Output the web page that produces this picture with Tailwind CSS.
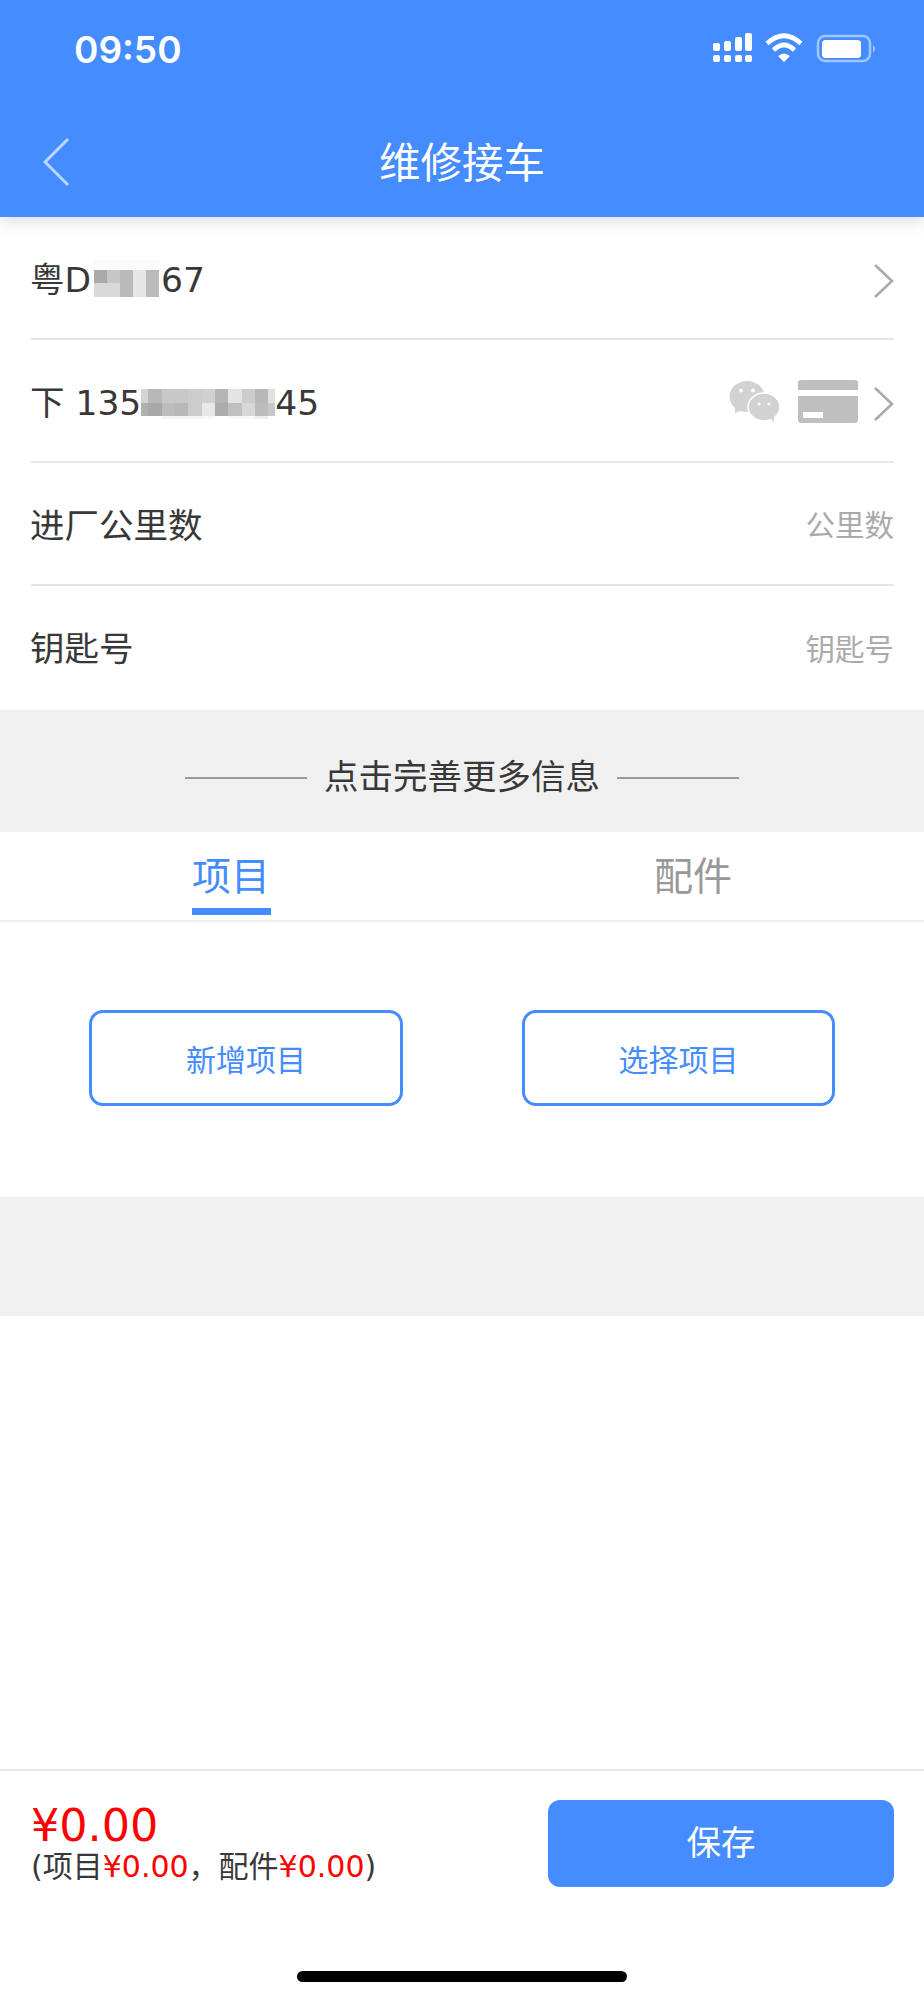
<!DOCTYPE html>
<html lang="zh">
<head>
<meta charset="utf-8">
<title>维修接车</title>
<script src="https://cdn.jsdelivr.net/npm/@tailwindcss/browser@4"></script>
</head>
<body class="bg-white">
<div class="w-[924px] h-[2000px] flex flex-col overflow-hidden relative bg-white text-[#383838] font-['DejaVu_Sans','Noto_Sans_CJK_SC',sans-serif]">

  <!-- header -->
  <header class="relative z-10 h-[217px] shrink-0 bg-[#448cff] text-white shadow-[0_4px_16px_rgba(0,0,0,0.14)]">
    <div class="h-[100px] flex items-start justify-between pt-[27px] pl-[74px] pr-[47px]">
      <span class="text-[37px] leading-[46px] font-semibold font-['Inter',sans-serif]">09:50</span>
      <svg width="164" height="32" viewBox="0 0 164 32" class="mt-[6px]" fill="white">
        <rect x="0" y="10" width="7" height="8" rx="2"/><rect x="11" y="8" width="7" height="10" rx="2"/><rect x="22" y="4" width="7" height="14" rx="2"/><rect x="32" y="0" width="7" height="18" rx="2"/>
        <rect x="0" y="22" width="7" height="7" rx="2"/><rect x="11" y="22" width="7" height="7" rx="2"/><rect x="22" y="22" width="7" height="7" rx="2"/><rect x="32" y="22" width="7" height="7" rx="2"/>
        <g fill="none" stroke="white" stroke-width="4.6">
          <path d="M54 10.5 Q71 -5 88 10.5"/><path d="M60.5 17 Q71 7 81.5 17"/>
        </g>
        <path d="M65 23 Q71 18 77 23 L71 29 Z"/>
        <rect x="105" y="3" width="52" height="25" rx="7" fill="none" stroke="white" stroke-opacity="0.5" stroke-width="2.5"/>
        <rect x="109" y="7" width="39" height="18" rx="3.5"/>
        <path d="M160 12 Q164 15.5 160 20 Z" fill-opacity="0.5"/>
      </svg>
    </div>
    <div class="relative h-[117px] flex items-center justify-center pt-[10px]">
      <svg width="28" height="52" viewBox="0 0 28 52" fill="none" class="absolute left-[43px] top-[37px]"><path d="M25 2 L2 25 L25 48" stroke="white" stroke-opacity="0.65" stroke-width="3"/></svg>
      <h1 class="text-[41.5px] leading-[50px] font-normal">维修接车</h1>
    </div>
  </header>

  <!-- form rows -->
  <section class="pl-[31px] pr-[30px] shrink-0">
    <div class="h-[123px] border-b-2 border-[#e6e6e6] flex items-center justify-between text-[34.5px] pt-[6px]">
      <div class="flex items-center -ml-px">
        <span>粤D</span>
        <div class="grid grid-cols-5 w-[65px] ml-[3px] h-[37px] mt-[-4px] grid-rows-[10px_13px_14px]">
          <i class="bg-[#fbfbfb]"></i><i class="bg-[#fbfbfb]"></i><i class="bg-[#fbfbfb]"></i><i class="bg-[#fbfbfb]"></i><i class="bg-[#fbfbfb]"></i>
          <i class="bg-[#aaaaaa]"></i><i class="bg-[#c6c6c6]"></i><i class="bg-[#b9b9b9]"></i><i class="bg-[#e6e6e6]"></i><i class="bg-[#bbbbbb]"></i>
          <i class="bg-[#d9d9d9]"></i><i class="bg-[#d9d9d9]"></i><i class="bg-[#b9b9b9]"></i><i class="bg-[#e6e6e6]"></i><i class="bg-[#bbbbbb]"></i>
        </div>
        <span class="ml-[2px]">67</span>
      </div>
      <svg width="22" height="36" viewBox="0 0 22 36" fill="none" class="-mr-px"><path d="M2 2 L19 18 L2 34" stroke="#aaaaaa" stroke-width="2.6"/></svg>
    </div>
    <div class="h-[123px] border-b-2 border-[#e6e6e6] flex items-center justify-between text-[34.5px] pt-[6px]">
      <div class="flex items-center -ml-px">
        <span class="whitespace-pre">下 135</span>
        <div class="grid grid-cols-[7px_repeat(9,13.33px)_7px] w-[134px] h-[30px] grid-rows-[14px_13px_3px] mt-[1px]">
          <i class="bg-[#d4d4d4]"></i><i class="bg-[#b8b8b8]"></i><i class="bg-[#c8c8c8]"></i><i class="bg-[#c8c8c8]"></i><i class="bg-[#cccccc]"></i><i class="bg-[#d0d0d0]"></i><i class="bg-[#b4b4b4]"></i><i class="bg-[#e4e4e4]"></i><i class="bg-[#cccccc]"></i><i class="bg-[#b8b8b8]"></i><i class="bg-[#e0e0e0]"></i>
          <i class="bg-[#b0b0b0]"></i><i class="bg-[#a8a8a8]"></i><i class="bg-[#bcbcbc]"></i><i class="bg-[#b8b8b8]"></i><i class="bg-[#cccccc]"></i><i class="bg-[#e8e8e8]"></i><i class="bg-[#acacac]"></i><i class="bg-[#c0c0c0]"></i><i class="bg-[#d8d8d8]"></i><i class="bg-[#bcbcbc]"></i><i class="bg-[#c8c8c8]"></i>
          <i class="bg-white"></i><i class="bg-white"></i><i class="bg-[#f4f4f4]"></i><i class="bg-[#f4f4f4]"></i><i class="bg-[#f4f4f4]"></i><i class="bg-[#f8f8f8]"></i><i class="bg-white"></i><i class="bg-[#f8f8f8]"></i><i class="bg-[#f8f8f8]"></i><i class="bg-[#eeeeee]"></i><i class="bg-white"></i>
        </div>
        <span>45</span>
      </div>
      <div class="flex items-center -mr-px">
        <svg width="50" height="41" viewBox="0 0 50 41" class="mr-[19px] mb-[4px]">
          <ellipse cx="18" cy="15.5" rx="17.5" ry="15.5" fill="#d2d2d2"/>
          <path d="M6 25 L6 32 L14 29 Z" fill="#d2d2d2"/>
          <ellipse cx="35" cy="26" rx="16" ry="14" fill="#d2d2d2" stroke="white" stroke-width="1.5"/>
          <path d="M41 37 L45 41 L45 34 Z" fill="#d2d2d2"/>
          <circle cx="12" cy="9.5" r="2" fill="white"/><circle cx="24" cy="9.5" r="2" fill="white"/>
          <circle cx="30" cy="23" r="1.6" fill="white"/><circle cx="40" cy="23" r="1.6" fill="white"/>
        </svg>
        <svg width="60" height="43" viewBox="0 0 60 43" class="mr-[15px] mb-[4px]" fill="#bfbfbf">
          <path d="M0 10 V3 a3 3 0 0 1 3 -3 H57 a3 3 0 0 1 3 3 V10 Z"/>
          <path fill-rule="evenodd" d="M0 16 H60 V40 a3 3 0 0 1 -3 3 H3 a3 3 0 0 1 -3 -3 Z M5 32 V38 H25 V32 Z"/>
        </svg>
        <svg width="22" height="36" viewBox="0 0 22 36" fill="none"><path d="M2 2 L19 18 L2 34" stroke="#aaaaaa" stroke-width="2.6"/></svg>
      </div>
    </div>
    <div class="h-[123px] border-b-2 border-[#e6e6e6] flex items-center justify-between text-[34.5px] pt-[6px]">
      <span class="-ml-px">进厂公里数</span><span class="text-[29.5px] text-[#aaaaaa]">公里数</span>
    </div>
    <div class="h-[124px] flex items-center justify-between text-[34.5px] pt-[4px]">
      <span class="-ml-px">钥匙号</span><span class="text-[29.5px] text-[#aaaaaa]">钥匙号</span>
    </div>
  </section>

  <!-- more info band -->
  <div class="h-[122px] shrink-0 bg-[#f0f0f0] flex items-center justify-center gap-[17px] text-[34.5px] pt-[14px]">
    <i class="block w-[122px] h-[2px] bg-[#999999]"></i>
    <span>点击完善更多信息</span>
    <i class="block w-[122px] h-[2px] bg-[#999999]"></i>
  </div>

  <!-- tabs -->
  <div class="h-[90px] shrink-0 grid grid-cols-2 border-b-2 border-[#eeeeee] text-[39px]">
    <div class="flex flex-col items-center text-[#448cff]">
      <span class="leading-[46px] mt-[22px]">项目</span>
      <i class="block w-[79px] h-[7px] mt-[8px] bg-[#448cff]"></i>
    </div>
    <div class="flex flex-col items-center text-[#999999]">
      <span class="leading-[46px] mt-[22px]">配件</span>
    </div>
  </div>

  <!-- actions -->
  <div class="h-[275px] shrink-0 flex items-start justify-between pl-[89px] pr-[89px] pt-[88px]">
    <button class="w-[314px] h-[96px] rounded-[14px] border-[3px] border-[#448cff] text-[#448cff] text-[30px] pt-[4px]">新增项目</button>
    <button class="w-[313px] h-[96px] rounded-[14px] border-[3px] border-[#448cff] text-[#448cff] text-[30px] pt-[4px]">选择项目</button>
  </div>

  <div class="h-[119px] shrink-0 bg-[#f0f0f0]"></div>
  <div class="flex-1"></div>

  <!-- footer -->
  <footer class="h-[231px] shrink-0 border-t-2 border-[#e5e5e5] flex items-start justify-between pl-[31px] pr-[30px] pt-[29px]">
    <div class="pt-[2px]">
      <div class="text-[44.5px] leading-[48px] text-[#ff0000]">¥0.00</div>
      <div class="text-[30px] leading-[34px]">(项目<span class="text-[#ff0000]">¥0.00</span>，配件<span class="text-[#ff0000]">¥0.00</span>)</div>
    </div>
    <button class="w-[346px] h-[87px] rounded-[12px] bg-[#448cff] text-white text-[34.5px]">保存</button>
  </footer>

  <div class="absolute left-[297px] top-[1971px] w-[330px] h-[11px] rounded-full bg-black"></div>
</div>
</body>
</html>
